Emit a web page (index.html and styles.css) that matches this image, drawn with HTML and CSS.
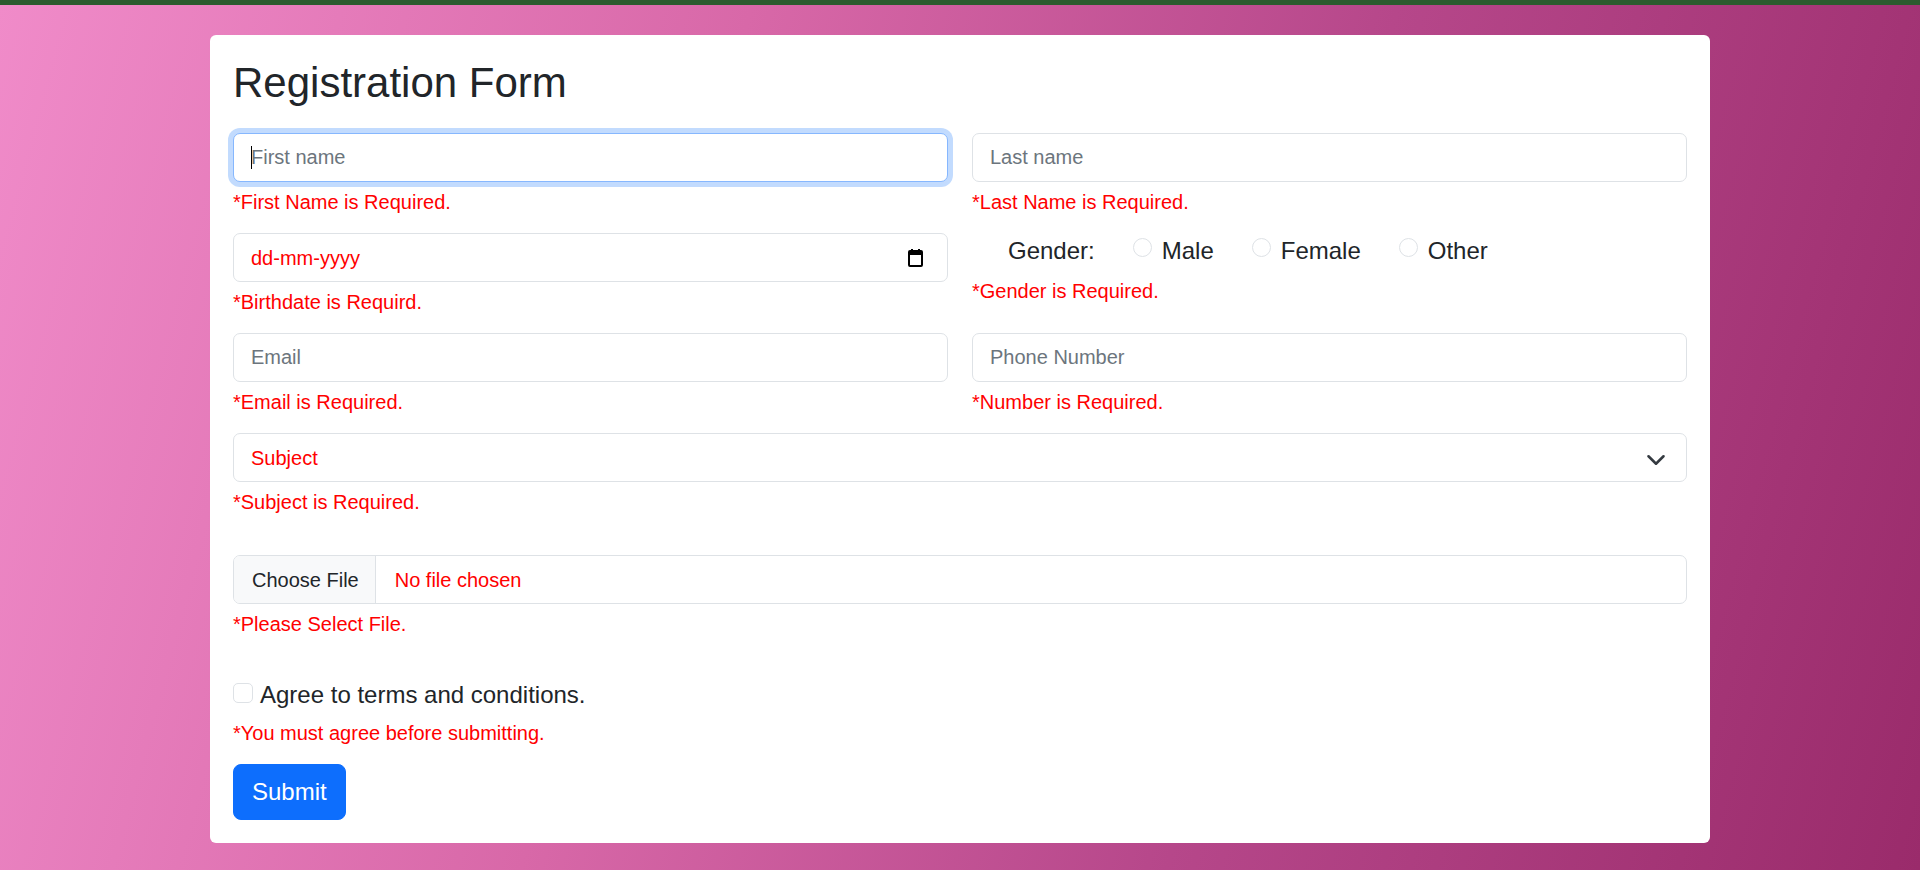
FILE: index.html
```html
<!DOCTYPE html>
<html lang="en">
<head>
<meta charset="utf-8">
<title>Registration Form</title>
<link rel="stylesheet" href="styles.css">
</head>
<body>
<main class="page">
  <section class="card">
    <h1 class="title">Registration Form</h1>
    <form class="form">
      <div class="field">
        <div class="input-wrap">
          <input class="control focused" type="text" placeholder="First name">
          <span class="caret"></span>
        </div>
        <div class="error">*First Name is Required.</div>
      </div>
      <div class="field">
        <input class="control" type="text" placeholder="Last name">
        <div class="error">*Last Name is Required.</div>
      </div>

      <div class="field">
        <div class="control fake date">
          <span class="red">dd-mm-yyyy</span>
          <svg class="cal" width="15" height="18" viewBox="0 0 15 18" aria-hidden="true">
            <rect x="3" y="0" width="2" height="3" fill="#000"/>
            <rect x="10" y="0" width="2" height="3" fill="#000"/>
            <rect x="1" y="2" width="13" height="15" rx="1" fill="none" stroke="#000" stroke-width="2"/>
            <rect x="1" y="2" width="13" height="4" fill="#000"/>
          </svg>
        </div>
        <div class="error">*Birthdate is Requird.</div>
      </div>
      <div class="field">
        <div class="gender-line">
          <span class="gender-label">Gender:</span>
          <label class="opt"><input class="radio" type="radio" name="g"><span>Male</span></label>
          <label class="opt"><input class="radio" type="radio" name="g"><span>Female</span></label>
          <label class="opt"><input class="radio" type="radio" name="g"><span>Other</span></label>
        </div>
        <div class="error gender-error">*Gender is Required.</div>
      </div>

      <div class="field">
        <input class="control" type="text" placeholder="Email">
        <div class="error">*Email is Required.</div>
      </div>
      <div class="field">
        <input class="control" type="text" placeholder="Phone Number">
        <div class="error">*Number is Required.</div>
      </div>

      <div class="field full spaced">
        <div class="control fake select">
          <span class="red">Subject</span>
          <svg class="chev" width="20" height="15" viewBox="0 0 16 12" aria-hidden="true">
            <path d="m2 5 6 6 6-6" fill="none" stroke="#343a40" stroke-width="2" stroke-linecap="round" stroke-linejoin="round"/>
          </svg>
        </div>
        <div class="error">*Subject is Required.</div>
      </div>

      <div class="field full spaced">
        <div class="control fake file">
          <span class="file-btn">Choose File</span>
          <span class="red file-name">No file chosen</span>
        </div>
        <div class="error">*Please Select File.</div>
      </div>

      <div class="field full last">
        <label class="check-line"><input class="checkbox" type="checkbox"><span>Agree to terms and conditions.</span></label>
        <div class="error">*You must agree before submitting.</div>
      </div>

      <div class="full">
        <button class="submit" type="button">Submit</button>
      </div>
    </form>
  </section>
</main>
</body>
</html>
```

FILE: styles.css
```css
* { box-sizing: border-box; }

html, body { height: 100%; }

body {
  margin: 0;
  min-height: 870px;
  border-top: 5px solid #2c5b2f;
  background: linear-gradient(105deg, #f08bc9 0%, #d868a8 35%, #b6478a 65%, #9a2b6b 100%);
  font-family: "Liberation Sans", Arial, sans-serif;
  color: #212529;
}

.page {
  padding-top: 30px;
}

.card {
  width: 1500px;
  margin: 0 auto;
  background: #fff;
  border-radius: 6px;
  padding: 23px 23px 23px;
}

.title {
  margin: 0 0 25px;
  font-size: 42px;
  line-height: 50px;
  font-weight: 400;
  color: #212529;
}

.form {
  display: grid;
  grid-template-columns: 1fr 1fr;
  column-gap: 24px;
}

.field { margin-bottom: 16px; }
.field.full { grid-column: 1 / -1; }
.full { grid-column: 1 / -1; }
.field.spaced { margin-bottom: 38px; }
.field.last { margin-bottom: 16px; }

.input-wrap { position: relative; }

.control {
  display: block;
  width: 100%;
  height: 49px;
  padding: 0 17px;
  border: 1px solid #dee2e6;
  border-radius: 7px;
  background: #fff;
  font-family: "Liberation Sans", Arial, sans-serif;
  font-size: 20px;
  color: #212529;
  outline: none;
}

.control::placeholder { color: #6c757d; opacity: 1; }

.control.focused {
  border-color: #86b7fe;
  box-shadow: 0 0 0 5px rgba(13, 110, 253, 0.25);
}

.caret {
  position: absolute;
  left: 18px;
  top: 13px;
  width: 1px;
  height: 23px;
  background: #000;
}

.fake {
  display: flex;
  align-items: center;
  line-height: 30px;
}

.red { color: #ff0000; }

.date { justify-content: space-between; padding-right: 24px; }
.cal { display: block; }

.select { justify-content: space-between; padding-right: 20px; }
.chev { display: block; }

.file { padding: 0; overflow: hidden; }
.file-btn {
  display: flex;
  align-items: center;
  height: 100%;
  padding: 0 16px 0 18px;
  background: #f8f9fa;
  border-right: 1px solid #dee2e6;
  color: #212529;
}
.file-name { margin-left: 19px; }

.error {
  margin-top: 5px;
  font-size: 20px;
  line-height: 30px;
  color: #ff0000;
}

.gender-error { margin-top: 7px; }

.gender-line {
  display: flex;
  align-items: flex-start;
  padding-left: 36px;
  font-size: 24px;
  line-height: 36px;
  color: #212529;
}

.gender-label { margin-right: 38px; }

.opt {
  display: flex;
  align-items: flex-start;
  margin-right: 38px;
}

.radio {
  appearance: none;
  -webkit-appearance: none;
  width: 19px;
  height: 19px;
  margin: 5px 10px 0 0;
  border: 1px solid #dee2e6;
  border-radius: 50%;
  background: #fff;
  flex: none;
}

.check-line {
  display: flex;
  align-items: flex-start;
  font-size: 24px;
  line-height: 36px;
  color: #212529;
}

.checkbox {
  appearance: none;
  -webkit-appearance: none;
  width: 20px;
  height: 20px;
  margin: 6px 7px 0 0;
  border: 1px solid #dee2e6;
  border-radius: 5px;
  background: #fff;
  flex: none;
}

.submit {
  display: inline-block;
  padding: 9px 18px;
  border: 1px solid #0d6efd;
  border-radius: 8px;
  background: #0d6efd;
  color: #fff;
  font-family: "Liberation Sans", Arial, sans-serif;
  font-size: 24px;
  line-height: 36px;
  cursor: pointer;
}
```
